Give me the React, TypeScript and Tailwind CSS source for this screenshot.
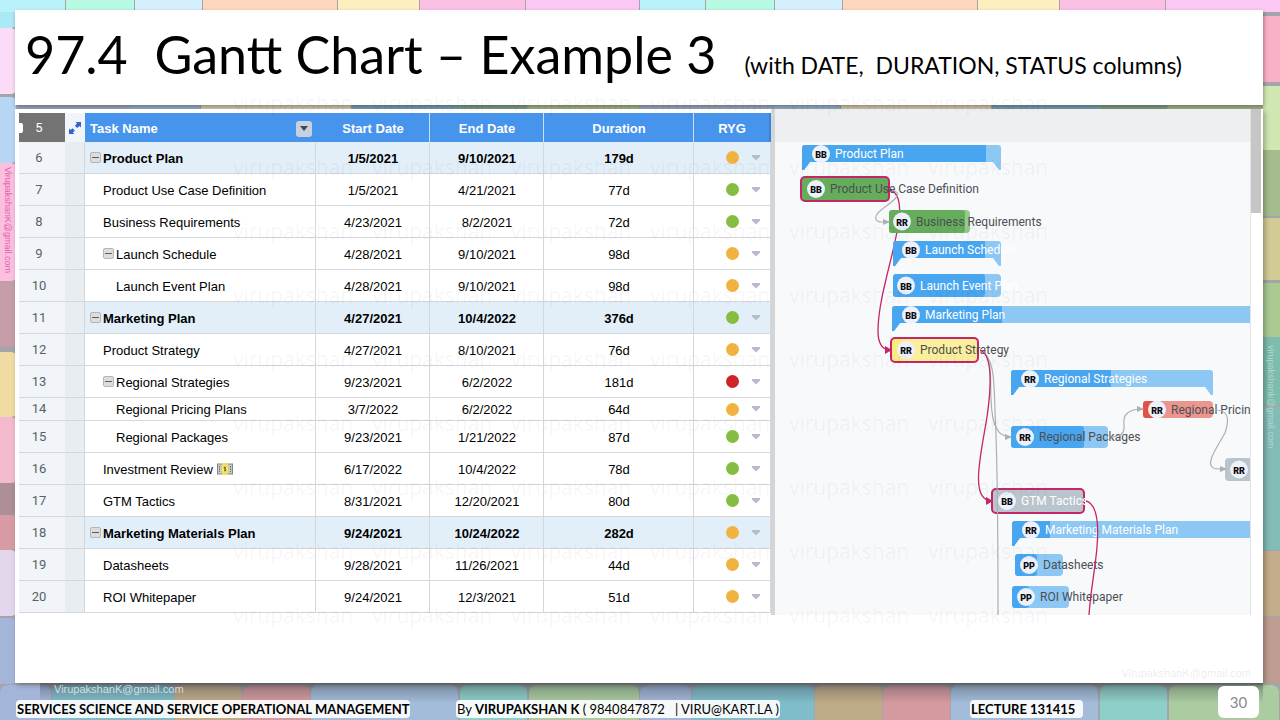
import { useState } from 'react';
import clsx from 'clsx';

type Status = 'yellow' | 'green' | 'red';

type Task = {
  row: number;
  name: string;
  start: string;
  end: string;
  duration: string;
  status: Status;
  level: number;
  parent?: boolean;
  summary?: boolean;
  short?: boolean;
  money?: boolean;
};

const tasks: Task[] = [
  { row: 6, name: 'Product Plan', start: '1/5/2021', end: '9/10/2021', duration: '179d', status: 'yellow', level: 0, parent: true, summary: true },
  { row: 7, name: 'Product Use Case Definition', start: '1/5/2021', end: '4/21/2021', duration: '77d', status: 'green', level: 1 },
  { row: 8, name: 'Business Requirements', start: '4/23/2021', end: '8/2/2021', duration: '72d', status: 'green', level: 1 },
  { row: 9, name: 'Launch Schedule', start: '4/28/2021', end: '9/10/2021', duration: '98d', status: 'yellow', level: 1, parent: true },
  { row: 10, name: 'Launch Event Plan', start: '4/28/2021', end: '9/10/2021', duration: '98d', status: 'yellow', level: 2 },
  { row: 11, name: 'Marketing Plan', start: '4/27/2021', end: '10/4/2022', duration: '376d', status: 'green', level: 0, parent: true, summary: true },
  { row: 12, name: 'Product Strategy', start: '4/27/2021', end: '8/10/2021', duration: '76d', status: 'yellow', level: 1 },
  { row: 13, name: 'Regional Strategies', start: '9/23/2021', end: '6/2/2022', duration: '181d', status: 'red', level: 1, parent: true },
  { row: 14, name: 'Regional Pricing Plans', start: '3/7/2022', end: '6/2/2022', duration: '64d', status: 'yellow', level: 2, short: true },
  { row: 15, name: 'Regional Packages', start: '9/23/2021', end: '1/21/2022', duration: '87d', status: 'green', level: 2 },
  { row: 16, name: 'Investment Review', start: '6/17/2022', end: '10/4/2022', duration: '78d', status: 'green', level: 1, money: true },
  { row: 17, name: 'GTM Tactics', start: '8/31/2021', end: '12/20/2021', duration: '80d', status: 'green', level: 1 },
  { row: 18, name: 'Marketing Materials Plan', start: '9/24/2021', end: '10/24/2022', duration: '282d', status: 'yellow', level: 0, parent: true, summary: true },
  { row: 19, name: 'Datasheets', start: '9/28/2021', end: '11/26/2021', duration: '44d', status: 'yellow', level: 1 },
  { row: 20, name: 'ROI Whitepaper', start: '9/24/2021', end: '12/3/2021', duration: '51d', status: 'yellow', level: 1 },
];

const dotColors: Record<Status, string> = {
  yellow: 'bg-[#f1b33f]',
  green: 'bg-[#86bd40]',
  red: 'bg-[#cf2528]',
};

const indents = ['pl-[5px]', 'pl-[18px]', 'pl-[31px]'];

type Bar = {
  label?: string;
  who: string;
  x: number;
  y: number;
  w: number;
  h: number;
  done: number;
  avatar: number;
  fill: string;
  light: string;
  text: string;
  summary?: boolean;
  critical?: boolean;
};

const BLUE = '#48a5ef';
const LIGHT_BLUE = '#8dc7f3';
const DARK = '#4b4f54';

const bars: Bar[] = [
  { label: 'Product Plan', who: 'BB', x: 27, y: 36, w: 199, h: 17, done: 184, avatar: 46, fill: BLUE, light: LIGHT_BLUE, text: '#fff', summary: true },
  { label: 'Product Use Case Definition', who: 'BB', x: 26, y: 68, w: 88, h: 24, done: 88, avatar: 41, fill: '#66ad5b', light: '#66ad5b', text: DARK, critical: true },
  { label: 'Business Requirements', who: 'RR', x: 114, y: 101, w: 81, h: 23, done: 76, avatar: 127, fill: '#66ad5b', light: '#97c890', text: DARK },
  { label: 'Launch Schedule', who: 'BB', x: 118, y: 132, w: 108, h: 17, done: 92, avatar: 136, fill: BLUE, light: LIGHT_BLUE, text: '#fff', summary: true },
  { label: 'Launch Event Plan', who: 'BB', x: 118, y: 165, w: 108, h: 23, done: 92, avatar: 131, fill: BLUE, light: LIGHT_BLUE, text: '#fff' },
  { label: 'Marketing Plan', who: 'BB', x: 117, y: 197, w: 2000, h: 17, done: 110, avatar: 136, fill: BLUE, light: LIGHT_BLUE, text: '#fff', summary: true },
  { label: 'Product Strategy', who: 'RR', x: 116, y: 229, w: 87, h: 24, done: 14, avatar: 131, fill: '#fbec80', light: '#fbef9b', text: DARK, critical: true },
  { label: 'Regional Strategies', who: 'RR', x: 236, y: 261, w: 202, h: 17, done: 100, avatar: 255, fill: BLUE, light: LIGHT_BLUE, text: '#fff', summary: true },
  { label: 'Regional Pricing Plans', who: 'RR', x: 368, y: 292, w: 70, h: 17, done: 12, avatar: 382, fill: '#e05247', light: '#eb958e', text: DARK },
  { label: 'Regional Packages', who: 'RR', x: 236, y: 317, w: 97, h: 22, done: 73, avatar: 250, fill: BLUE, light: LIGHT_BLUE, text: DARK },
  { who: 'RR', x: 450, y: 349, w: 110, h: 23, done: 0, avatar: 464, fill: '#b9c4cc', light: '#b9c4cc', text: '#fff' },
  { label: 'GTM Tactics', who: 'BB', x: 217, y: 380, w: 92, h: 24, done: 0, avatar: 232, fill: '#b9c4cc', light: '#b9c4cc', text: '#fff', critical: true },
  { label: 'Marketing Materials Plan', who: 'RR', x: 237, y: 412, w: 2000, h: 17, done: 38, avatar: 256, fill: BLUE, light: LIGHT_BLUE, text: '#fff', summary: true },
  { label: 'Datasheets', who: 'PP', x: 240, y: 445, w: 48, h: 22, done: 22, avatar: 254, fill: BLUE, light: LIGHT_BLUE, text: DARK },
  { label: 'ROI Whitepaper', who: 'PP', x: 237, y: 477, w: 57, h: 22, done: 17, avatar: 251, fill: BLUE, light: LIGHT_BLUE, text: DARK },
];

function GanttBar({ bar }: { bar: Bar }) {
  const { x, y, w, h, done } = bar;
  const right = x + w;
  const cy = bar.summary ? y + 9 : y + h / 2;

  return (
    <g>
      {bar.summary && (
        <>
          <path d={`M${x} ${y + 3}q0 -3 3 -3H${right - 3}q3 0 3 3V${y + 25}h-2l-6 -8H${x + 8}l-6 8h-2Z`} fill={bar.light} />
          <path d={`M${x} ${y + 3}q0 -3 3 -3H${x + done}V${y + 17}H${x + 8}l-6 8h-2Z`} fill={bar.fill} />
        </>
      )}
      {!bar.summary && (
        <>
          <rect x={x} y={y} width={w} height={h} rx="4" fill={bar.light} />
          {done > 0 && <rect x={x} y={y} width={done} height={h} rx="3" fill={bar.fill} />}
          {bar.critical && (
            <rect x={x} y={y} width={w} height={h} rx="4" fill="none" stroke="#c42667" strokeWidth="2" />
          )}
        </>
      )}
      <circle cx={bar.avatar} cy={cy} r="9" fill="#ecf1fb" />
      <text x={bar.avatar} y={cy + 4} textAnchor="middle" className="text-[9px] font-black" fill="#0b0b0b">
        {bar.who}
      </text>
      {bar.label && (
        <text x={bar.avatar + 14} y={cy + 4} className="text-[12px]" fill={bar.text}>
          {bar.label}
        </text>
      )}
    </g>
  );
}

function GanttChart() {
  return (
    <svg className="h-full w-full font-[Roboto,sans-serif]" role="img" aria-label="Gantt chart">
      <defs>
        <marker id="greyArrow" markerWidth="8" markerHeight="8" refX="6" refY="4" orient="auto" markerUnits="userSpaceOnUse">
          <path d="M0 1L7 4L0 7Z" fill="#abb0b5" />
        </marker>
        <marker id="redArrow" markerWidth="9" markerHeight="9" refX="6" refY="4" orient="auto" markerUnits="userSpaceOnUse">
          <path d="M0 0L7 4L0 8Z" fill="#c42667" />
        </marker>
      </defs>

      {/* critical path behind the bars */}
      <path d="M115 81C123 83 126 94 124 110C121 140 103 188 103 222C103 236 108 241 116 241" fill="none" stroke="#c42667" strokeWidth="1.3" markerEnd="url(#redArrow)" />

      {bars.map(bar => (
        <GanttBar key={bar.y} bar={bar} />
      ))}

      <g fill="none" stroke="#abb0b5" strokeWidth="1.2">
        <path d="M117 81C128 84 121 90 110 98C97 107 99 113 107 113H114" markerEnd="url(#greyArrow)" />
        <path d="M205 241C218 246 215 268 216 290C217 318 223 328 236 328" markerEnd="url(#greyArrow)" />
        <path d="M205 241C220 247 219 275 220 302C222 340 223 390 223 506" />
        <path d="M334 328C346 328 350 324 349 316C348 308 350 300 368 300" markerEnd="url(#greyArrow)" />
        <path d="M440 301C453 301 455 309 450 324C441 340 426 360 444 360H451" markerEnd="url(#greyArrow)" />
      </g>
      <path d="M205 241C218 246 216 280 212 308C206 345 194 392 217 392" fill="none" stroke="#c42667" strokeWidth="1.3" markerEnd="url(#redArrow)" />
      <path d="M311 392C322 395 324 414 322 438C320 462 316 478 314 506" fill="none" stroke="#c42667" strokeWidth="1.3" />
    </svg>
  );
}

function MoneyIcon() {
  return (
    <svg viewBox="0 0 16 12" className="ml-1 inline-block h-3 w-4 align-[-1px]" aria-hidden="true">
      <rect x="0.5" y="1" width="15" height="10" fill="#c9cbb9" stroke="#85877c" />
      <path d="M2.500 3v6M13.500 3v6" stroke="#6e7068" strokeDasharray="1.500 1" />
      <rect x="5" y="0" width="6" height="12" fill="#f3dc62" />
      <circle cx="8" cy="6" r="2.500" fill="#fbf1a8" />
      <path d="M9 4.500H7.200v1.500h1.700v1.600H7M8 3.500v5" fill="none" stroke="#6d5a14" strokeWidth="0.8" />
    </svg>
  );
}

function ResizeIcon() {
  return (
    <svg viewBox="0 0 14 14" className="mx-auto h-[14px] w-[14px]" aria-hidden="true">
      <path d="M7.500 1H13v5.500l-1.600-1.600-2.200 2.200-2.300-2.300 2.200-2.200ZM6.500 13H1V7.500l1.600 1.600 1.900-1.900 2.300 2.300-1.900 1.900Z" fill="#2d63d8" />
    </svg>
  );
}

function TaskTable() {
  const [collapsed, setCollapsed] = useState<number[]>([]);

  const toggle = (row: number) => {
    setCollapsed(collapsed.includes(row) ? collapsed.filter(r => r !== row) : [...collapsed, row]);
  };

  return (
    <table className="w-[752px] table-fixed border-separate border-spacing-0 text-center text-[13px] leading-5 text-black">
      <colgroup>
        <col className="w-[46px]" />
        <col className="w-5" />
        <col className="w-[231px]" />
        <col className="w-[114px]" />
        <col className="w-[114px]" />
        <col className="w-[150px]" />
        <col className="w-[77px]" />
      </colgroup>
      <thead>
        <tr className="h-[29px] bg-[#4794ec] text-white">
          <th className="relative bg-[#737373] pr-1.5 font-[Roboto,sans-serif] font-normal">
            <span className="absolute left-0 top-2.5 h-2.5 w-1 rounded-r-[2px] bg-white" />5
          </th>
          <th className="bg-[#f1f5f9]"><ResizeIcon /></th>
          <th className="pl-[5px] pr-1 pt-0.5 text-left">
            <div className="flex items-center justify-between">
              <span>Task Name</span>
              <button aria-label="Column menu" className="flex h-4 w-4 items-center justify-center rounded-[3px] bg-[#c6d0e0]">
                <svg viewBox="0 0 8 5" className="h-[5px] w-2" aria-hidden="true"><path d="M0 0h8L4 5Z" fill="#40474f" /></svg>
              </button>
            </div>
          </th>
          <th className="border-r border-white/70 pl-px pt-0.5">Start Date</th>
          <th className="border-r border-white/70 pl-px pt-0.5">End Date</th>
          <th className="border-r border-white/70 pl-px pt-0.5">Duration</th>
          <th className="border-r-2 border-[#3a83d9] pl-px pt-0.5">RYG</th>
        </tr>
      </thead>
      <tbody>
        {tasks.map(task => (
          <tr
            key={task.row}
            className={clsx(
              '[&>td]:border-b [&>td]:border-r [&>td]:border-[#d5d8da]',
              task.short ? 'h-[23px]' : 'h-8',
              task.summary ? 'bg-[#e2eff9] font-bold' : 'bg-white',
            )}
          >
            <td className="border-r-0! bg-[#f1f5f9] pr-1.5 font-[Roboto,sans-serif] font-normal text-[#5c6066]">{task.row}</td>
            <td className="bg-[#e8edf1]" />
            <td className={clsx('truncate pt-0.5 text-left', indents[task.level])}>
              {task.parent && (
                <button
                  aria-label={`Toggle ${task.name}`}
                  onClick={() => toggle(task.row)}
                  className="mr-0.5 inline-flex h-[11px] w-[11px] items-center justify-center rounded-[2px] border border-[#b4b7b9] bg-[#dcdddd] align-[2px]"
                >
                  <svg viewBox="0 0 7 7" className="h-[7px] w-[7px]" aria-hidden="true">
                    <path d={collapsed.includes(task.row) ? 'M0 3.500h7M3.500 0v7' : 'M0 3.500h7'} stroke="#5a5d60" />
                  </svg>
                </button>
              )}
              {task.name}
              {task.money && <MoneyIcon />}
            </td>
            <td className="pl-px pt-0.5">{task.start}</td>
            <td className="pl-px pt-0.5">{task.end}</td>
            <td className="pl-px pt-0.5">{task.duration}</td>
            <td>
              <div className="flex items-center justify-end gap-3 pr-[9px]">
                <span className={clsx('h-[13px] w-[13px] rounded-full', dotColors[task.status])} />
                <button aria-label={`Status of ${task.name}`} className="flex h-3 items-center">
                  <svg viewBox="0 0 10 6" className="h-1.5 w-[10px]" aria-hidden="true"><path d="M1 0h8v1.500L5 5.500 1 1.500Z" fill="#b5bcca" /></svg>
                </button>
              </div>
            </td>
          </tr>
        ))}
      </tbody>
    </table>
  );
}

type Tile = [number, number, string];

// start, size, colour; the rows repeat every 640px
const topTiles: Tile[] = [[0, 66, '#b9f2fb'], [66, 69, '#b7fae2'], [135, 68, '#d5effc'], [203, 135, '#fdd8be'], [338, 82, '#feefc0'], [420, 106, '#fbc1e5'], [526, 114, '#fbc8f5']];
const gapTiles: Tile[] = [[0, 134, '#a3afc0'], [134, 67, '#9cb6cd'], [201, 151, '#ddd0b4'], [352, 108, '#7fa3b5'], [460, 68, '#86a488'], [528, 112, '#a9ba8e']];
const bottomTiles: Tile[] = [[0, 52, '#a3b6da'], [52, 123, '#80bcc9'], [175, 68, '#c0ab88'], [243, 68, '#d59a9f'], [311, 148, '#a3bcda'], [460, 68, '#8ecfc9'], [529, 111, '#abcca0']];
const leftTiles: Tile[] = [[0, 28, '#abe9f5'], [28, 66, '#fbdcf8'], [97, 66, '#b7d6f4'], [163, 118, '#fbbfe0'], [281, 66, '#c49da8'], [352, 65, '#f0dba2'], [417, 66, '#f3b9cd'], [483, 32, '#ad8f96'], [515, 35, '#d99ba3'], [550, 66, '#e2d5ec'], [618, 66, '#a3b6da']];
const rightTiles: Tile[] = [[0, 12, '#fbc8f5'], [16, 66, '#f9afc4'], [86, 64, '#d0e7b2'], [150, 66, '#a5bd8e'], [218, 62, '#d3cb94'], [283, 54, '#aaca92'], [337, 68, '#7dbdad'], [407, 143, '#83bcb7'], [551, 65, '#c3ad8a'], [617, 66, '#bf9c92']];

function Backdrop() {
  return (
    <svg viewBox="0 0 1280 720" preserveAspectRatio="none" className="absolute inset-0 h-full w-full" aria-hidden="true">
      <defs>
        <linearGradient id="shade" x1="0" y1="0" x2="0" y2="1">
          <stop offset="0" stopColor="#30383f" stopOpacity="0.4" />
          <stop offset="1" stopColor="#30383f" stopOpacity="0" />
        </linearGradient>
      </defs>
      <rect width="1280" height="720" fill="#a3a5aa" />
      {leftTiles.map(([y, h, fill]) => (
        <rect key={y} x="-20" y={y} width="37" height={h} rx="6" fill={fill} />
      ))}
      {rightTiles.map(([y, h, fill]) => (
        <rect key={y} x="1258" y={y} width="40" height={h} fill={fill} />
      ))}
      {[0, 640].map(offset => (
        <g key={offset}>
          {topTiles.map(([x, w, fill]) => (
            <rect key={x} x={x + offset} y="-10" width={w - 1} height="22" fill={fill} />
          ))}
          {gapTiles.map(([x, w, fill]) => (
            <rect key={x} x={Math.max(16, x + offset)} y="100" width={w - 1} height="12" fill={fill} />
          ))}
          {bottomTiles.map(([x, w, fill]) => (
            <rect key={x} x={x + offset} y="685" width={w - 1} height="50" rx="8" fill={fill} />
          ))}
        </g>
      ))}
      <rect x="1263" y="100" width="17" height="12" fill="#d0e7b2" />
      <rect x="40" y="683" width="1223" height="20" fill="url(#shade)" />
    </svg>
  );
}

function Watermarks() {
  return (
    <div className="pointer-events-none absolute left-[233px] top-[71px] grid grid-cols-[repeat(6,139px)] font-['Open_Sans',sans-serif] text-[21px] leading-[64px] text-black/5" aria-hidden="true">
      {Array.from({ length: 54 }, (_, i) => (
        <span key={i}>virupakshan</span>
      ))}
    </div>
  );
}

export default function App() {
  return (
    <div className="relative flex min-h-screen flex-col overflow-hidden pt-2.5 font-['Liberation_Sans',Arial,sans-serif]">
      <Backdrop />

      <header className="relative ml-[15px] mr-[17px] flex h-[95px] items-baseline gap-7 whitespace-pre bg-white pl-2.5 font-[Lato,sans-serif] text-black shadow-[1px_2px_4px_rgba(0,0,0,0.35)]">
        <h1 className="text-[52px] leading-[88px]">97.4  Gantt Chart – Example 3</h1>
        <p className="text-[23px]">(with DATE,  DURATION, STATUS columns)</p>
      </header>

      <main className="relative ml-[15px] mr-[17px] mt-1 flex-1 bg-white pl-1 pr-0.5 shadow-[2px_2px_5px_rgba(0,0,0,0.3)]">
        <div className="flex h-[506px] overflow-hidden">
          <div className="shrink-0 pt-1">
            <TaskTable />
          </div>
          <div className="w-1 shrink-0 bg-[#d4d5d7]" />
          <div className="min-w-0 flex-1 border-r border-[#e3e4e6] bg-[linear-gradient(#eeeff1_33px,#f8f9fb_33px)]">
            <GanttChart />
          </div>
          <div className="w-2.5 shrink-0 bg-white">
            <div className="h-[104px] bg-[#c6c6c6]" />
          </div>
        </div>
        <span className="absolute bottom-0.5 right-3 text-[11px] text-black/10">VirupakshanK@gmail.com</span>
      </main>

      <footer className="relative grid h-[37px] grid-cols-[440px_514px_1fr_auto] items-end pb-0.5 pl-4 pr-[21px] font-[Lato,sans-serif] text-[13px] leading-[18px] text-black">
        <span className="absolute left-[54px] top-0 text-[11px] leading-3 text-white/70 font-['Liberation_Sans',Arial,sans-serif]">VirupakshanK@gmail.com</span>
        <div><strong className="inline-block rounded bg-white/90 px-px">SERVICES SCIENCE AND SERVICE OPERATIONAL MANAGEMENT</strong></div>
        <div className="whitespace-pre">
          <span className="inline-block rounded bg-white/90 px-px">By <strong>VIRUPAKSHAN K</strong> ( 9840847872   | VIRU@KART.LA )</span>
        </div>
        <div><strong className="inline-block rounded bg-white/90 pl-px pr-2">LECTURE 131415</strong></div>
        <div className="flex h-8 w-[41px] items-center justify-center rounded-md bg-white text-[15px] text-[#8b8b8b]">30</div>
      </footer>

      <span className="absolute left-0 top-[167px] w-[15px] text-[9px] leading-[15px] text-[#e45fae] [writing-mode:vertical-rl]">VirupakshanK@gmail.com</span>
      <span className="absolute right-0.5 top-[345px] w-[15px] text-[9px] leading-[15px] text-white/40 [writing-mode:vertical-rl]">virupakshank@gmail.com</span>
      <Watermarks />
    </div>
  );
}
